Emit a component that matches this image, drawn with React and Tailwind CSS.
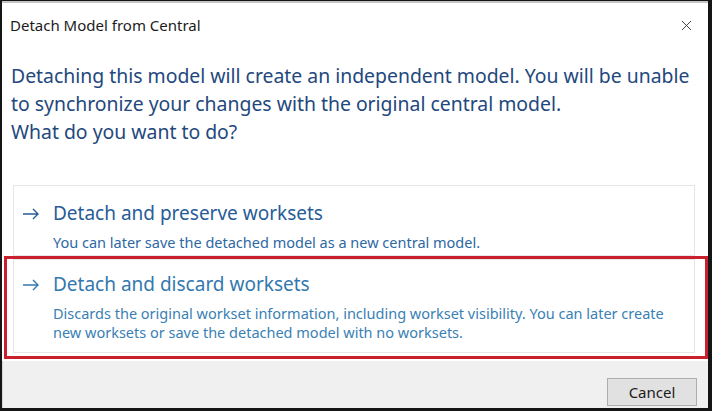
import { X } from "lucide-react";

const font = { fontFamily: '"Noto Sans", "Open Sans", sans-serif' };

function Arrow({ className }) {
  return (
    <svg className={className} width="18" height="12" viewBox="0 0 18 12" fill="none" stroke="currentColor" strokeWidth="1.4">
      <path d="M1 6h15M11 1l5 5-5 5" />
    </svg>
  );
}

function Option({ title, children, titleColor, textColor, className }) {
  return (
    <div className={`flex items-start border border-[#e6e6e6] bg-white pl-[8px] ${className}`}>
      <Arrow className={`mt-[8px] w-[18px] shrink-0 ${titleColor}`} />
      <div className="ml-[13px]">
        <div className={`text-[19px] leading-[26px] ${titleColor}`}>{title}</div>
        <div className={`mt-[7px] text-[14.5px] leading-[19px] ${textColor}`}>{children}</div>
      </div>
    </div>
  );
}

export default function App() {
  return (
    <div className="h-[411px] w-[712px] bg-[#151515] pb-[3px] pl-[2px] pr-[4px] pt-[1px]" style={font}>
      <div className="flex h-full flex-col border-t-2 border-[#c4c4c4] bg-white">
        <div className="flex h-[44px] items-center justify-between pl-[8px] pr-[13px]">
          <span className="text-[15px] text-[#1b1b1b]">Detach Model from Central</span>
          <X size={17} strokeWidth={1.3} className="text-[#333]" />
        </div>

        <div className="mt-[15px] pl-[9px] text-[19.4px] leading-[28px] text-[#23487d]">
          <p>Detaching this model will create an independent model. You will be unable</p>
          <p>to synchronize your changes with the original central model.</p>
          <p>What do you want to do?</p>
        </div>

        <div className="mt-[39px] ml-[11px] mr-[13px]">
          <Option className="pt-[14px] pb-[3px]" title="Detach and preserve worksets" titleColor="text-[#285c97]" textColor="text-[#2d68a3]">
            You can later save the detached model as a new central model.
          </Option>
        </div>

        <div className="ml-[2px] border-[3px] border-[#c8202e] pb-[3px] pl-[6px] pr-[10px]">
          <Option className="pt-[11px] pb-[10px]" title="Detach and discard worksets" titleColor="text-[#3378ae]" textColor="text-[#3a7fb5]">
            <p>Discards the original workset information, including workset visibility. You can later create</p>
            <p>new worksets or save the detached model with no worksets.</p>
          </Option>
        </div>

        <div className="mt-[2px] flex flex-1 items-end justify-end border-l border-[#d8d8d8] bg-[#f0f0f0] pb-[2px] pr-[11px]">
          <button className="h-[28px] w-[90px] border border-[#adadad] bg-[#e1e1e1] text-[15px] text-[#1b1b1b]">Cancel</button>
        </div>
      </div>
    </div>
  );
}
